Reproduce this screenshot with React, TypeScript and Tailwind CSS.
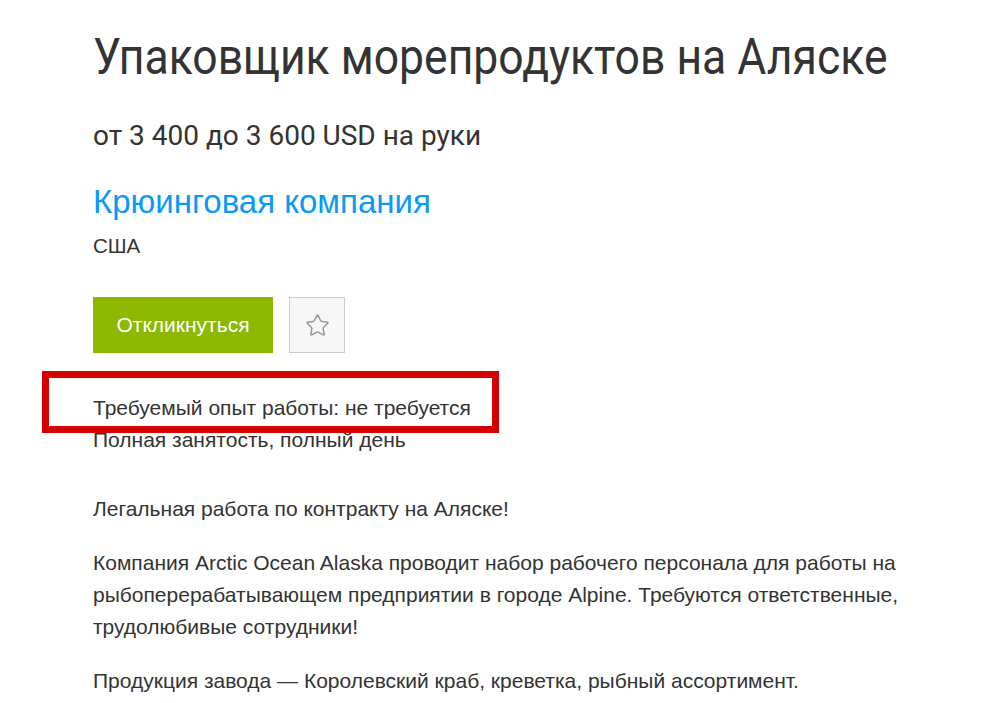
import { Star } from "lucide-react";

export default function App() {
  return (
    <div className="min-h-screen bg-white text-[#333]">
      <div className="relative px-[93px] pt-[28px]">
        <h1 className="origin-left scale-x-[0.89] whitespace-nowrap font-['Roboto',sans-serif] text-[50px] font-normal leading-[58px] text-[#333]">
          Упаковщик морепродуктов на Аляске
        </h1>
        <p className="mt-[33px] font-['Roboto',sans-serif] text-[28px] leading-[34px] text-[#333]">
          от 3 400 до 3 600 USD на руки
        </p>
        <a
          href="#"
          className="mt-[30px] block font-['Liberation_Sans',Arial,sans-serif] text-[33px] leading-[38px] text-[#0a9af5]"
        >
          Крюинговая компания
        </a>
        <p className="mt-[13px] font-['Liberation_Sans',Arial,sans-serif] text-[20.5px] leading-[24px]">
          США
        </p>

        <div className="mt-[39px] flex gap-4">
          <button className="flex h-[56px] w-[180px] items-center justify-center bg-[#8cb900] font-['Liberation_Sans',Arial,sans-serif] text-[21px] text-white">
            Откликнуться
          </button>
          <button className="flex h-[56px] w-[56px] items-center justify-center border border-[#cccccc] bg-[#f7f7f7]">
            <Star size={25} strokeWidth={1.5} className="text-[#999]" />
          </button>
        </div>

        <div className="mt-[39px] font-['Liberation_Sans',Arial,sans-serif] text-[21px] leading-[32px]">
          <p>Требуемый опыт работы: не требуется</p>
          <p>Полная занятость, полный день</p>
        </div>

        <div className="mt-[37px] font-['Liberation_Sans',Arial,sans-serif] text-[21px] leading-[32px]">
          <p>Легальная работа по контракту на Аляске!</p>
          <p className="mt-[22px]">
            Компания Arctic Ocean Alaska проводит набор рабочего персонала для работы на
            <br />
            рыбоперерабатывающем предприятии в городе Alpine. Требуются ответственные,
            <br />
            трудолюбивые сотрудники!
          </p>
          <p className="mt-[22px]">Продукция завода — Королевский краб, креветка, рыбный ассортимент.</p>
        </div>

        <div className="pointer-events-none absolute left-[42px] top-[371px] h-[62px] w-[457px] border-[7px] border-[#d40000]" />
      </div>
    </div>
  );
}
